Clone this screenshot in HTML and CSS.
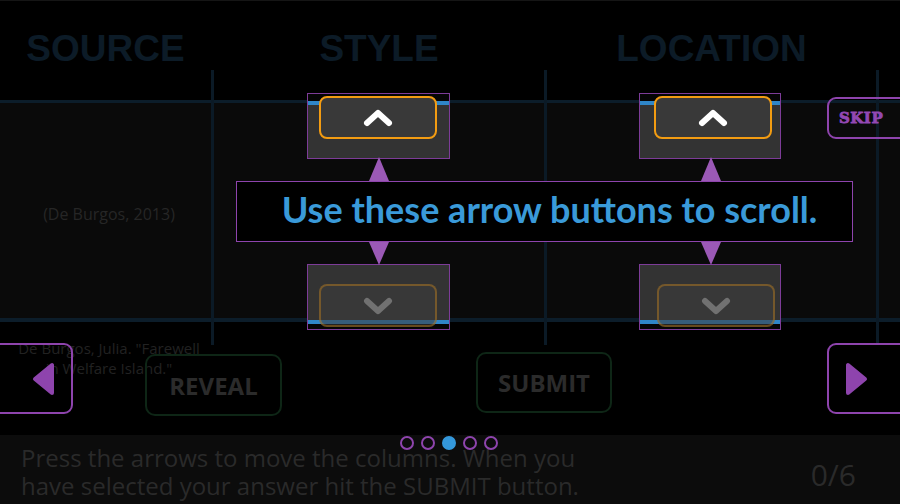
FILE: index.html
```html
<!DOCTYPE html>
<html lang="en">
<head>
<meta charset="utf-8">
<title>Tutorial</title>
<link rel="stylesheet" href="styles.css">
</head>
<body>
<div class="app">
  <header class="titles">
    <div class="title c1">SOURCE</div>
    <div class="title c2">STYLE</div>
    <div class="title c3">LOCATION</div>
  </header>

  <section class="board">
    <div class="col c1">
      <p class="cite current">(De Burgos, 2013)</p>
      <p class="cite next">De Burgos, Julia. "Farewell<br>in Welfare Island."</p>
    </div>
    <div class="col c2"></div>
    <div class="col c3"></div>
  </section>

  <section class="actions">
    <button class="action reveal">REVEAL</button>
    <button class="action submit">SUBMIT</button>
  </section>

  <footer class="footer">
    <p class="instructions">Press the arrows to move the columns. When you have selected your answer hit the SUBMIT button.</p>
    <div class="score">0/6</div>
  </footer>

  <!-- tutorial overlay -->
  <div class="panel up style">
    <div class="scroll-btn">
      <svg class="chev" width="30" height="18" viewBox="0 0 30 18"><path d="M4 14 L15 4 L26 14" /></svg>
    </div>
  </div>
  <div class="panel up loc">
    <div class="scroll-btn">
      <svg class="chev" width="30" height="18" viewBox="0 0 30 18"><path d="M4 14 L15 4 L26 14" /></svg>
    </div>
  </div>
  <div class="panel down style">
    <div class="scroll-btn">
      <svg class="chev" width="30" height="18" viewBox="0 0 30 18"><path d="M4 4 L15 14 L26 4" /></svg>
    </div>
  </div>
  <div class="panel down loc">
    <div class="scroll-btn">
      <svg class="chev" width="30" height="18" viewBox="0 0 30 18"><path d="M4 4 L15 14 L26 4" /></svg>
    </div>
  </div>

  <div class="pointer up style"></div>
  <div class="pointer up loc"></div>
  <div class="pointer down style"></div>
  <div class="pointer down loc"></div>

  <div class="tip">Use these arrow buttons to scroll.</div>

  <div class="skip">SKIP</div>

  <div class="nav prev">
    <svg width="22" height="34" viewBox="0 0 22 34"><polygon points="20,3 20,31 3,17" /></svg>
  </div>
  <div class="nav next">
    <svg width="22" height="34" viewBox="0 0 22 34"><polygon points="2,3 2,31 19,17" /></svg>
  </div>

  <div class="dots">
    <span class="dot"></span>
    <span class="dot"></span>
    <span class="dot on"></span>
    <span class="dot"></span>
    <span class="dot"></span>
  </div>
</div>
</body>
</html>
```

FILE: styles.css
```css
* { box-sizing: border-box; }

html, body {
  margin: 0;
  padding: 0;
  background: #000;
}

.app {
  position: relative;
  width: 900px;
  height: 504px;
  overflow: hidden;
  background: #000;
  border-top: 1px solid #151515;
  font-family: "Open Sans", "DejaVu Sans", sans-serif;
}

/* ---------- column titles ---------- */
.titles {
  display: flex;
  height: 69px;
  padding-top: 27px;
}
.title {
  border-right: 3px solid transparent;
  text-align: center;
  font-family: "Liberation Sans", Arial, sans-serif;
  font-weight: 700;
  font-size: 37px;
  line-height: 42px;
  color: #0c1b27;
}
.c1 { width: 214px; }
.c2 { width: 333px; }
.c3 { width: 332px; }

/* ---------- board ---------- */
.board {
  display: flex;
  height: 275px;
  background: linear-gradient(
    to bottom,
    transparent 0 30px,
    #0c1d2a 30px 33px,
    #0a0a0a 33px 248px,
    #0c1d2a 248px 252px,
    transparent 252px
  );
}
.col {
  height: 100%;
  border-right: 3px solid #0b1a26;
}
.col.c1 {
  padding: 133px 0 0 7px;
  text-align: center;
}
.cite {
  margin: 0;
  color: #262626;
  white-space: nowrap;
}
.cite.current {
  font-size: 16px;
  line-height: 22px;
}
.cite.next {
  margin-top: 113px;
  font-size: 15px;
  line-height: 20px;
  color: #222;
}

/* ---------- actions ---------- */
.actions {
  display: flex;
  align-items: flex-start;
  gap: 194px;
  height: 90px;
  padding-left: 145px;
}
.action {
  width: 137px;
  height: 62px;
  padding: 0;
  border: 2px solid #0e2616;
  border-radius: 10px;
  background: transparent;
  font-family: "Open Sans", sans-serif;
  font-weight: 700;
  font-size: 24px;
  color: #2b2b2b;
}
.action.reveal { margin-top: 9px; }
.action.submit { margin-top: 7px; width: 136px; height: 61px; }

/* ---------- footer ---------- */
.footer {
  display: flex;
  justify-content: space-between;
  align-items: flex-start;
  height: 69px;
  background: #0c0c0c;
}
.instructions {
  margin: 0;
  padding: 9px 0 0 21px;
  width: 611px;
  font-size: 24px;
  line-height: 28px;
  color: #2a2a2a;
}
.score {
  margin: 25px 44px 0 0;
  font-size: 30px;
  line-height: 30px;
  color: #2a2a2a;
}

/* ---------- tutorial overlay ---------- */
.panel {
  position: absolute;
  width: 143px;
  height: 66px;
  border: 1px solid #7d3c98;
}
.panel.style { left: 307px; }
.panel.loc { left: 639px; width: 142px; }
.panel.up {
  top: 92px;
  background: linear-gradient(to bottom, #050505 0 7px, #2f86c8 7px 11px, #333 11px);
}
.panel.down {
  top: 263px;
  background: linear-gradient(to bottom, #333 0 55px, #2f86c8 55px 59px, #050505 59px);
}

.scroll-btn {
  position: absolute;
  left: 11px;
  width: 118px;
  height: 43px;
  border: 2px solid #f39c12;
  border-radius: 8px;
  background: #393939;
  display: flex;
  align-items: center;
  justify-content: center;
}
.panel.up .scroll-btn { top: 2px; }
.panel.down .scroll-btn {
  top: 19px;
  border-color: rgba(243, 156, 18, 0.33);
  background: rgba(60, 60, 60, 0.55);
}
.panel.loc.up .scroll-btn { left: 14px; }
.panel.loc.down .scroll-btn { left: 17px; }

.chev path {
  fill: none;
  stroke: #fff;
  stroke-width: 6;
  stroke-linecap: round;
  stroke-linejoin: round;
}
.panel.down .chev path { stroke: #717171; }

.pointer {
  position: absolute;
  width: 0;
  height: 0;
  border-left: 10px solid transparent;
  border-right: 10px solid transparent;
}
.pointer.style { left: 369px; }
.pointer.loc { left: 701px; }
.pointer.up {
  top: 156px;
  border-bottom: 24px solid #9b59b6;
}
.pointer.down {
  top: 241px;
  border-top: 23px solid #9b59b6;
}

.tip {
  position: absolute;
  left: 236px;
  top: 180px;
  width: 617px;
  height: 61px;
  padding: 6px 0 0 10px;
  border: 1px solid #8e44ad;
  background: #000;
  text-align: center;
  font-family: Lato, "Open Sans", sans-serif;
  font-weight: 700;
  font-size: 36px;
  line-height: 43px;
  color: #3a9ad9;
  white-space: nowrap;
}

.skip {
  position: absolute;
  left: 827px;
  top: 96px;
  width: 90px;
  height: 42px;
  padding-left: 10px;
  border: 2px solid #8e44ad;
  border-radius: 9px;
  font-family: "DejaVu Serif", serif;
  font-weight: 700;
  font-size: 15px;
  letter-spacing: 0.5px;
  line-height: 38px;
  color: #9348b3;
  -webkit-text-stroke: 0.8px #9348b3;
}

.nav {
  position: absolute;
  top: 342px;
  height: 71px;
  border: 2px solid #8e44ad;
  border-radius: 9px;
  display: flex;
  align-items: center;
}
.nav.prev {
  left: -12px;
  width: 85px;
  justify-content: flex-end;
  padding-right: 17px;
}
.nav.next {
  left: 827px;
  width: 90px;
  padding-left: 17px;
}
.nav polygon {
  fill: #8e44ad;
  stroke: #8e44ad;
  stroke-width: 4;
  stroke-linejoin: round;
}

.dots {
  position: absolute;
  left: 400px;
  top: 435px;
  display: flex;
  gap: 7px;
}
.dot {
  width: 14px;
  height: 14px;
  border: 2px solid #8e44ad;
  border-radius: 50%;
}
.dot.on {
  border-color: #3498db;
  background: #3498db;
}
```
